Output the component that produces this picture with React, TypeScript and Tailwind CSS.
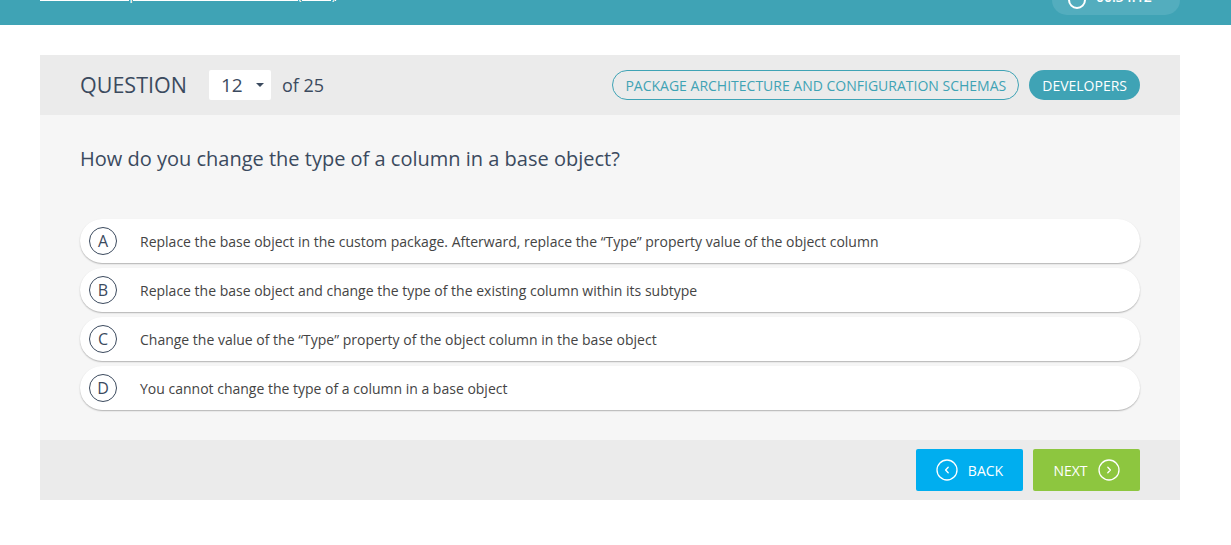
import React from "react";

const options = [
  { l: "A", t: "Replace the base object in the custom package. Afterward, replace the \u201CType\u201D property value of the object column" },
  { l: "B", t: "Replace the base object and change the type of the existing column within its subtype" },
  { l: "C", t: "Change the value of the \u201CType\u201D property of the object column in the base object" },
  { l: "D", t: "You cannot change the type of a column in a base object" },
];

function Chevron({ dir }: { dir: "l" | "r" }) {
  return (
    <svg width="22" height="22" viewBox="0 0 22 22" fill="none" stroke="white" strokeWidth="1.3">
      <circle cx="11" cy="11" r="10" />
      {dir === "l" ? (
        <path d="M12.2 8.2 L9.6 11 L12.2 13.8" strokeLinecap="round" strokeLinejoin="round" />
      ) : (
        <path d="M9.8 8.2 L12.4 11 L9.8 13.8" strokeLinecap="round" strokeLinejoin="round" />
      )}
    </svg>
  );
}

export default function App() {
  return (
    <div
      className="w-[1231px] h-[545px] bg-white overflow-hidden"
      style={{ fontFamily: '"Open Sans", "Noto Sans", sans-serif' }}
    >
      {/* top bar */}
      <div className="h-[25px] bg-[#3fa3b5] overflow-hidden flex justify-between pl-[40px] pr-[51px]">
        <div className="mt-[-16px] h-[20px] text-white text-[14.5px] leading-[20px] underline underline-offset-[1px] whitespace-nowrap">
          Create a test plan for self-assessment (beta)
        </div>
        <div className="mt-[-15px] h-[30px] w-[128px] rounded-full bg-[#53adbe] flex items-center pl-[16px] gap-[10px] text-white font-semibold text-[14px]">
          <span className="inline-block w-[18px] h-[18px] rounded-full border-[2px] border-white" />
          <span className="mb-[8px]">00:34:12</span>
        </div>
      </div>

      {/* card */}
      <div className="mx-[40px] mt-[30px] w-[1140px]">
        {/* header */}
        <div className="h-[60px] bg-[#ebebeb] flex items-center pl-[40px] pr-[40px]">
          <span className="text-[21.5px] text-[#3b4a5e]">QUESTION</span>
          <div className="ml-[22px] w-[62px] h-[30px] bg-white rounded-[2px] flex items-center pl-[12px] text-[19px] text-[#3b4a5e]">
            <span>12</span>
            <span className="ml-[13px] w-0 h-0 border-l-[4px] border-r-[4px] border-t-[4px] border-l-transparent border-r-transparent border-t-[#3b4a5e]" />
          </div>
          <span className="ml-[11px] text-[18px] text-[#3b4a5e]">of 25</span>
          <div className="ml-auto flex items-center gap-[10px]">
            <span className="h-[30px] px-[12px] rounded-full border border-[#3fa3b5] text-[#3fa3b5] text-[14px] flex items-center">
              PACKAGE ARCHITECTURE AND CONFIGURATION SCHEMAS
            </span>
            <span className="h-[30px] px-[13px] rounded-full bg-[#3fa3b5] text-white text-[14px] flex items-center">
              DEVELOPERS
            </span>
          </div>
        </div>

        {/* body */}
        <div className="bg-[#f6f6f6] px-[40px] pt-[30px] pb-[30px]">
          <div className="text-[20px] text-[#3b4a5e] leading-[27px]">
            How do you change the type of a column in a base object?
          </div>
          <div className="mt-[47px] flex flex-col gap-[5px]">
            {options.map((o) => (
              <div
                key={o.l}
                className="h-[44px] bg-white rounded-full flex items-center pl-[9px] shadow-[0_1px_1.5px_rgba(0,0,0,0.28)]"
              >
                <span className="w-[28px] h-[28px] rounded-full border border-[#3b4a5e] text-[#3b4a5e] text-[16px] flex items-center justify-center">
                  {o.l}
                </span>
                <span className="ml-[23px] text-[14px] text-[#444]">{o.t}</span>
              </div>
            ))}
          </div>
        </div>

        {/* footer */}
        <div className="h-[60px] bg-[#ebebeb] flex items-center justify-end pr-[40px] gap-[10px]">
          <button className="w-[107px] h-[42px] bg-[#00aeef] rounded-[2px] text-white text-[14px] flex items-center justify-center gap-[10px]">
            <Chevron dir="l" />
            BACK
          </button>
          <button className="w-[107px] h-[42px] bg-[#8dc63f] rounded-[2px] text-white text-[14px] flex items-center justify-center gap-[10px]">
            NEXT
            <Chevron dir="r" />
          </button>
        </div>
      </div>
    </div>
  );
}
